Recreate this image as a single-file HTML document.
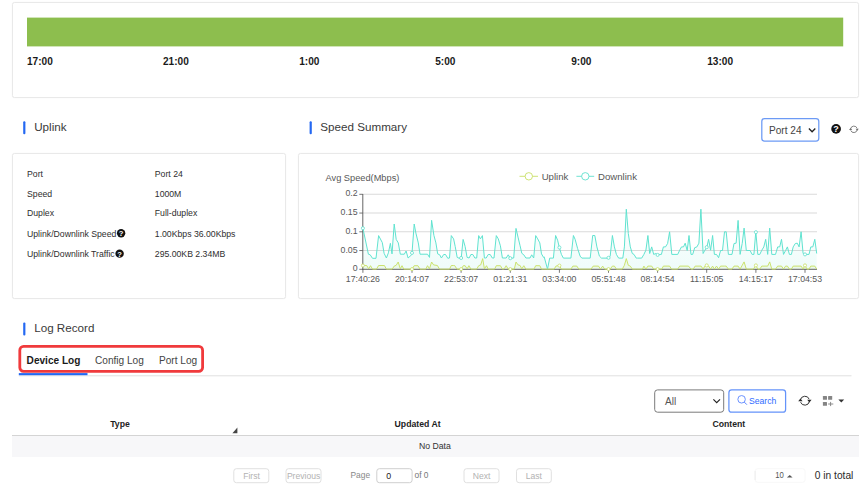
<!DOCTYPE html>
<html><head><meta charset="utf-8"><title>Port</title>
<style>
*{box-sizing:border-box;margin:0;padding:0}
html,body{width:863px;height:502px;background:#fff;overflow:hidden}
body{position:relative;font-family:"Liberation Sans",sans-serif;color:#333;font-size:8.7px}
.abs{position:absolute;white-space:nowrap}
.card{position:absolute;border:1px solid #e9e9e9;border-radius:2.5px;background:#fff;box-shadow:0 0 1.5px rgba(0,0,0,0.05)}
.tl{position:absolute;font-weight:bold;font-size:10.1px;color:#1a1a1a;top:56.3px;line-height:12px}
.bar{position:absolute;width:2px;background:#2468f2;border-radius:1px}
.h{position:absolute;font-size:11.65px;color:#3a3a3a;line-height:14px;white-space:nowrap}
.k{position:absolute;left:27px;font-size:8.7px;color:#2e2e2e;line-height:10px;white-space:nowrap}
.v{position:absolute;left:154.8px;font-size:8.7px;color:#2e2e2e;line-height:10px;white-space:nowrap}
.q{display:inline-block;width:8.4px;height:8.4px;border-radius:50%;background:#111;color:#fff;font-size:7px;font-weight:bold;line-height:8.6px;text-align:center;vertical-align:0.2px;margin-left:0.3px}
.ax{font-family:"Liberation Sans",sans-serif;font-size:8.75px;fill:#585858}
.lg{font-family:"Liberation Sans",sans-serif;font-size:9.6px;fill:#585858}
.tab{position:absolute;top:354.5px;font-size:10.1px;line-height:12px;color:#444;white-space:nowrap}
.btn{position:absolute;top:468.2px;height:15px;border:1px solid #e2e2e2;border-radius:2.5px;color:#b4b4b4;font-size:8.6px;line-height:13.4px;text-align:center;background:#fff}
.th{position:absolute;top:419px;font-weight:bold;font-size:8.7px;line-height:10px;color:#222;white-space:nowrap}
</style></head><body>

<div class="card" style="left:11.7px;top:1.8px;width:847.2px;height:95.8px"></div>
<svg class="abs" style="left:0;top:10px" width="863" height="40" viewBox="0 10 863 40"><rect x="27" y="17.6" width="816.2" height="28.8" fill="#8dbe4e"/></svg>
<div class="tl" style="left:27px">17:00</div>
<div class="tl" style="left:163px">21:00</div>
<div class="tl" style="left:299.2px">1:00</div>
<div class="tl" style="left:435.2px">5:00</div>
<div class="tl" style="left:571.2px">9:00</div>
<div class="tl" style="left:707.2px">13:00</div>


<div class="h" style="left:34.2px;top:120.3px">Uplink</div>

<div class="h" style="left:320.3px;top:120.3px">Speed Summary</div>

<svg class="abs" style="left:758px;top:115px" width="66" height="30" viewBox="758 115 66 30"><rect x="761.8" y="118.65" width="57" height="22.4" rx="2.8" fill="#fff" stroke="#6c9af5" stroke-width="1.25"/><path d="M808.9 128.5 L812.1 131.8 L815.3 128.5" fill="none" stroke="#222" stroke-width="1.3"/></svg>
<div class="abs" style="left:769px;top:124.6px;font-size:10.1px;line-height:12px;color:#444">Port 24</div>
<svg class="abs" style="left:828px;top:121px" width="16" height="16" viewBox="828 121 16 16"><circle cx="836.1" cy="128.9" r="4.85" fill="#111"/><text x="836.1" y="132.2" font-family="Liberation Sans, sans-serif" font-size="9" font-weight="bold" fill="#fff" text-anchor="middle">?</text></svg>
<svg class="abs" style="left:846px;top:122px" width="16" height="16" viewBox="846 122 16 16"><g fill="none" stroke="#6e6e6e" stroke-width="0.85"><path d="M850.6 128.8 A3.4 3.4 0 0 1 857.1 128.3"/><path d="M857.2 129.9 A3.4 3.4 0 0 1 850.7 130.4"/></g><path d="M855.6 128.7 L858.8 128.7 L857.2 130.7 Z M849 129.9 L852.2 129.9 L850.6 127.9 Z" fill="#6e6e6e"/></svg>

<div class="card" style="left:11.7px;top:153px;width:274.6px;height:145.5px"></div>
<div class="card" style="left:298px;top:153px;width:560.9px;height:145.5px"></div>

<svg class="abs" style="left:0;top:160px" width="290" height="110" viewBox="0 160 290 110" font-family="Liberation Sans, sans-serif" font-size="8.7" fill="#2e2e2e">
<text x="27" y="177">Port</text><text x="154.8" y="177">Port 24</text>
<text x="27" y="196.9">Speed</text><text x="154.8" y="196.9">1000M</text>
<text x="27" y="216.4">Duplex</text><text x="154.8" y="216.4">Full-duplex</text>
<text x="27" y="236.7">Uplink/Downlink Speed</text><text x="154.8" y="236.7">1.00Kbps 36.00Kbps</text>
<text x="27" y="257.3">Uplink/Downlink Traffic</text><text x="154.8" y="257.3">295.00KB 2.34MB</text>
<circle cx="121.1" cy="233.2" r="4.2" fill="#111"/><text x="121.1" y="236.1" font-size="7.6" font-weight="bold" fill="#fff" text-anchor="middle">?</text>
<circle cx="119.6" cy="253.6" r="4.2" fill="#111"/><text x="119.6" y="256.5" font-size="7.6" font-weight="bold" fill="#fff" text-anchor="middle">?</text>
</svg>

<svg class="abs" style="left:0;top:0" width="863" height="502" viewBox="0 0 863 502">
<text x="325.5" y="180.8" class="lg" style="font-size:9.25px">Avg Speed(Mbps)</text>
<line x1="519.5" y1="176.3" x2="538" y2="176.3" stroke="#c8e066" stroke-width="0.9"/>
<circle cx="528.8" cy="176.3" r="3.7" fill="#fff" stroke="#c8e066" stroke-width="0.9"/>
<text x="541.7" y="179.6" class="lg">Uplink</text>
<line x1="576.4" y1="176.3" x2="594.2" y2="176.3" stroke="#5fe0cd" stroke-width="0.9"/>
<circle cx="585.3" cy="176.3" r="3.7" fill="#fff" stroke="#5fe0cd" stroke-width="0.9"/>
<text x="598" y="179.6" class="lg">Downlink</text>
<line x1="362.8" y1="194.3" x2="817" y2="194.3" stroke="#dadada" stroke-width="1.1"/><line x1="362.8" y1="213.05" x2="817" y2="213.05" stroke="#dadada" stroke-width="1.1"/><line x1="362.8" y1="231.8" x2="817" y2="231.8" stroke="#dadada" stroke-width="1.1"/><line x1="362.8" y1="250.55" x2="817" y2="250.55" stroke="#dadada" stroke-width="1.1"/>
<defs><linearGradient id="gd" gradientUnits="userSpaceOnUse" x1="0" y1="205" x2="0" y2="269"><stop offset="0" stop-color="#5fe0cd" stop-opacity="0"/><stop offset="1" stop-color="#5fe0cd" stop-opacity="0.10"/></linearGradient><linearGradient id="gu" gradientUnits="userSpaceOnUse" x1="0" y1="250" x2="0" y2="269"><stop offset="0" stop-color="#c8e066" stop-opacity="0"/><stop offset="1" stop-color="#c8e066" stop-opacity="0.12"/></linearGradient></defs><polygon points="362.9,269.3 362.9,228.2 368.4,254.2 370.2,254.8 372.5,258.3 376.0,258.3 378.6,235.6 382.3,242.6 384.1,253.3 386.4,258.0 388.4,252.8 390.4,243.3 392.0,253.9 394.2,224.0 396.2,239.4 398.3,242.9 400.3,254.2 404.3,254.2 406.1,251.0 408.1,258.0 411.9,254.5 414.2,224.0 415.9,233.1 418.3,242.9 420.0,254.2 427.5,254.2 429.5,257.4 431.6,220.3 433.9,235.4 435.9,242.9 437.7,253.9 439.7,254.8 441.4,258.0 443.7,254.5 445.5,254.5 447.8,258.3 449.5,258.0 451.3,235.6 453.6,238.9 455.2,246.4 457.2,257.4 459.3,258.3 461.2,258.0 463.1,239.4 465.1,246.4 467.1,257.4 469.1,258.0 470.9,254.5 472.8,254.5 474.9,258.0 476.7,258.0 478.7,235.6 480.4,238.9 482.4,235.6 484.4,258.0 486.2,258.0 488.2,254.5 490.2,254.5 492.3,258.0 494.0,258.0 496.3,235.6 498.3,238.9 500.4,245.8 502.4,258.0 506.2,258.0 508.2,254.8 510.3,258.3 513.7,258.0 516.0,228.4 518.0,237.1 520.1,245.8 521.8,253.3 523.8,254.8 525.9,258.0 530.0,258.0 531.7,254.8 533.7,258.0 535.7,235.6 537.7,238.9 539.8,242.9 541.5,253.9 543.6,257.4 544.2,256.9 547.5,269.1 549.7,258.1 553.4,258.1 555.6,235.5 557.6,240.2 559.2,246.9 561.4,254.4 563.4,258.1 570.9,258.1 573.4,235.5 575.1,239.3 577.6,248.5 580.1,256.1 581.8,258.1 590.2,258.1 592.7,235.5 594.8,235.5 596.9,246.9 599.4,256.1 601.5,258.1 608.2,258.1 610.2,256.1 612.4,235.5 614.4,246.9 616.4,254.4 618.6,258.1 622.8,258.1 624.4,246.9 626.3,209.2 628.3,233.5 630.3,246.9 632.3,253.5 634.0,254.4 636.2,258.1 637.5,258.1 641.7,258.1 643.9,254.4 645.9,250.2 647.9,235.5 649.7,253.5 651.7,246.9 653.7,254.4 655.9,253.5 657.6,254.9 659.8,254.4 661.4,254.4 663.4,246.9 665.5,246.9 667.6,243.5 669.6,231.8 671.8,254.4 677.7,254.4 679.7,250.2 681.5,246.9 683.5,246.9 685.2,243.2 687.2,250.5 689.0,235.5 691.0,254.4 692.7,254.4 694.7,247.7 696.9,246.9 698.9,243.2 700.9,209.2 703.1,253.5 704.9,250.2 706.9,246.9 708.6,239.3 710.6,250.2 712.6,235.5 714.4,254.4 716.5,254.4 718.6,257.7 720.6,250.5 722.5,250.5 724.5,231.8 726.2,231.8 728.4,254.4 732.0,254.4 734.0,243.5 736.1,243.2 738.1,220.4 740.1,254.4 742.2,243.5 744.1,228.1 746.3,250.5 750.1,250.5 752.1,254.4 753.9,254.4 755.8,231.5 757.8,254.4 759.8,254.4 761.8,250.2 763.8,246.9 765.7,239.3 767.7,254.4 769.7,228.1 771.8,254.4 775.5,254.4 777.7,246.9 779.7,246.9 781.5,239.3 783.5,254.4 785.6,250.5 787.4,246.9 789.4,254.4 791.4,254.4 793.2,246.9 795.3,243.5 797.3,243.2 799.1,246.9 801.1,231.8 803.1,253.5 804.9,254.4 809.0,254.4 810.8,246.9 812.8,246.9 814.8,239.3 816.7,253.5 816.7,269.3" fill="url(#gd)"/>
<polygon points="362.9,269.3 362.9,265.5 366.7,265.5 368.7,268.8 370.5,265.7 372.5,269.1 376.5,269.1 378.6,265.5 384.4,265.5 386.4,269.1 392.2,269.1 394.2,266.1 396.2,265.3 398.2,262.0 400.3,268.8 402.0,265.7 403.8,269.1 410.1,269.1 412.1,269.1 414.2,265.7 417.9,265.7 420.0,269.1 425.8,269.1 427.5,265.7 429.5,268.8 431.6,262.0 433.6,264.9 437.4,265.5 439.5,269.1 449.5,269.1 451.3,265.5 453.6,265.5 454.6,265.5 457.0,269.1 461.2,269.1 463.3,265.7 465.1,265.7 467.1,268.8 468.9,265.7 470.9,269.1 476.7,269.1 478.7,265.7 480.7,264.9 482.7,258.6 484.4,268.8 486.5,265.7 488.2,269.1 494.6,269.1 496.3,265.7 500.4,265.7 502.4,269.1 504.2,268.8 506.2,265.7 508.2,269.1 510.3,269.1 514.3,269.1 516.0,262.0 518.0,264.9 520.1,265.5 521.8,268.8 523.8,265.7 525.9,269.1 534.0,269.1 535.7,265.7 539.8,265.7 541.5,269.1 543.9,269.1 544.2,269.1 554.2,269.1 555.9,266.1 559.2,265.3 561.4,269.1 570.9,269.1 572.9,266.1 576.8,266.1 578.8,269.1 591.0,269.1 593.2,266.1 598.5,266.1 600.5,269.1 602.7,266.1 604.7,269.1 608.2,269.1 610.2,269.1 612.4,266.1 614.4,266.1 616.4,269.1 622.3,269.1 624.4,265.3 626.3,258.6 628.3,265.3 630.3,266.1 632.3,269.1 636.2,269.1 642.5,269.1 643.9,266.1 645.9,269.1 647.9,266.1 651.7,266.1 653.7,269.1 657.6,269.1 661.8,269.1 663.4,266.1 669.6,266.1 671.5,269.1 677.7,269.1 679.7,266.1 688.5,266.1 691.0,269.1 693.2,269.1 695.2,266.1 701.1,266.1 703.1,269.1 704.9,266.1 706.9,265.3 708.6,266.1 710.6,269.1 712.6,266.1 714.4,269.1 716.5,266.1 718.6,269.1 720.6,266.1 724.5,266.1 726.2,266.1 728.4,269.1 732.0,269.1 734.0,266.1 738.1,266.1 740.1,269.1 742.2,265.3 744.1,261.9 746.3,269.1 753.4,269.1 755.8,265.3 757.8,269.1 759.8,269.1 761.8,266.1 767.7,266.1 769.7,261.9 771.8,269.1 775.5,269.1 777.7,266.1 781.5,266.1 783.5,269.1 785.6,266.1 787.4,266.1 789.4,269.1 791.4,269.1 793.2,266.1 801.1,266.1 803.1,269.1 804.9,265.3 807.0,269.1 809.0,269.1 810.8,266.1 814.8,266.1 816.7,269.1 816.7,269.3" fill="url(#gu)"/>
<line x1="362.8" y1="194" x2="362.8" y2="269.7" stroke="#555" stroke-width="0.9"/>
<line x1="362.4" y1="269.3" x2="817" y2="269.3" stroke="#555" stroke-width="0.9"/>
<line x1="362.9" y1="269.3" x2="362.9" y2="272.8" stroke="#555" stroke-width="0.8"/><line x1="412.0" y1="269.3" x2="412.0" y2="272.8" stroke="#555" stroke-width="0.8"/><line x1="461.1" y1="269.3" x2="461.1" y2="272.8" stroke="#555" stroke-width="0.8"/><line x1="510.3" y1="269.3" x2="510.3" y2="272.8" stroke="#555" stroke-width="0.8"/><line x1="559.4" y1="269.3" x2="559.4" y2="272.8" stroke="#555" stroke-width="0.8"/><line x1="608.5" y1="269.3" x2="608.5" y2="272.8" stroke="#555" stroke-width="0.8"/><line x1="657.6" y1="269.3" x2="657.6" y2="272.8" stroke="#555" stroke-width="0.8"/><line x1="706.7" y1="269.3" x2="706.7" y2="272.8" stroke="#555" stroke-width="0.8"/><line x1="755.9" y1="269.3" x2="755.9" y2="272.8" stroke="#555" stroke-width="0.8"/><line x1="805.0" y1="269.3" x2="805.0" y2="272.8" stroke="#555" stroke-width="0.8"/><text x="357.6" y="196.3" text-anchor="end" class="ax">0.2</text><line x1="359.3" y1="194.3" x2="362.8" y2="194.3" stroke="#555" stroke-width="0.8"/><text x="357.6" y="215.1" text-anchor="end" class="ax">0.15</text><line x1="359.3" y1="213.05" x2="362.8" y2="213.05" stroke="#555" stroke-width="0.8"/><text x="357.6" y="233.8" text-anchor="end" class="ax">0.1</text><line x1="359.3" y1="231.8" x2="362.8" y2="231.8" stroke="#555" stroke-width="0.8"/><text x="357.6" y="252.6" text-anchor="end" class="ax">0.05</text><line x1="359.3" y1="250.55" x2="362.8" y2="250.55" stroke="#555" stroke-width="0.8"/><text x="357.6" y="271.3" text-anchor="end" class="ax">0</text><line x1="359.3" y1="269.3" x2="362.8" y2="269.3" stroke="#555" stroke-width="0.8"/><text x="362.9" y="281.7" text-anchor="middle" class="ax">17:40:26</text><text x="412.0" y="281.7" text-anchor="middle" class="ax">20:14:07</text><text x="461.1" y="281.7" text-anchor="middle" class="ax">22:53:07</text><text x="510.3" y="281.7" text-anchor="middle" class="ax">01:21:31</text><text x="559.4" y="281.7" text-anchor="middle" class="ax">03:34:00</text><text x="608.5" y="281.7" text-anchor="middle" class="ax">05:51:48</text><text x="657.6" y="281.7" text-anchor="middle" class="ax">08:14:54</text><text x="706.7" y="281.7" text-anchor="middle" class="ax">11:15:05</text><text x="755.9" y="281.7" text-anchor="middle" class="ax">14:15:17</text><text x="805.0" y="281.7" text-anchor="middle" class="ax">17:04:53</text>
<polyline points="362.9,228.2 368.4,254.2 370.2,254.8 372.5,258.3 376.0,258.3 378.6,235.6 382.3,242.6 384.1,253.3 386.4,258.0 388.4,252.8 390.4,243.3 392.0,253.9 394.2,224.0 396.2,239.4 398.3,242.9 400.3,254.2 404.3,254.2 406.1,251.0 408.1,258.0 411.9,254.5 414.2,224.0 415.9,233.1 418.3,242.9 420.0,254.2 427.5,254.2 429.5,257.4 431.6,220.3 433.9,235.4 435.9,242.9 437.7,253.9 439.7,254.8 441.4,258.0 443.7,254.5 445.5,254.5 447.8,258.3 449.5,258.0 451.3,235.6 453.6,238.9 455.2,246.4 457.2,257.4 459.3,258.3 461.2,258.0 463.1,239.4 465.1,246.4 467.1,257.4 469.1,258.0 470.9,254.5 472.8,254.5 474.9,258.0 476.7,258.0 478.7,235.6 480.4,238.9 482.4,235.6 484.4,258.0 486.2,258.0 488.2,254.5 490.2,254.5 492.3,258.0 494.0,258.0 496.3,235.6 498.3,238.9 500.4,245.8 502.4,258.0 506.2,258.0 508.2,254.8 510.3,258.3 513.7,258.0 516.0,228.4 518.0,237.1 520.1,245.8 521.8,253.3 523.8,254.8 525.9,258.0 530.0,258.0 531.7,254.8 533.7,258.0 535.7,235.6 537.7,238.9 539.8,242.9 541.5,253.9 543.6,257.4 544.2,256.9 547.5,269.1 549.7,258.1 553.4,258.1 555.6,235.5 557.6,240.2 559.2,246.9 561.4,254.4 563.4,258.1 570.9,258.1 573.4,235.5 575.1,239.3 577.6,248.5 580.1,256.1 581.8,258.1 590.2,258.1 592.7,235.5 594.8,235.5 596.9,246.9 599.4,256.1 601.5,258.1 608.2,258.1 610.2,256.1 612.4,235.5 614.4,246.9 616.4,254.4 618.6,258.1 622.8,258.1 624.4,246.9 626.3,209.2 628.3,233.5 630.3,246.9 632.3,253.5 634.0,254.4 636.2,258.1 637.5,258.1 641.7,258.1 643.9,254.4 645.9,250.2 647.9,235.5 649.7,253.5 651.7,246.9 653.7,254.4 655.9,253.5 657.6,254.9 659.8,254.4 661.4,254.4 663.4,246.9 665.5,246.9 667.6,243.5 669.6,231.8 671.8,254.4 677.7,254.4 679.7,250.2 681.5,246.9 683.5,246.9 685.2,243.2 687.2,250.5 689.0,235.5 691.0,254.4 692.7,254.4 694.7,247.7 696.9,246.9 698.9,243.2 700.9,209.2 703.1,253.5 704.9,250.2 706.9,246.9 708.6,239.3 710.6,250.2 712.6,235.5 714.4,254.4 716.5,254.4 718.6,257.7 720.6,250.5 722.5,250.5 724.5,231.8 726.2,231.8 728.4,254.4 732.0,254.4 734.0,243.5 736.1,243.2 738.1,220.4 740.1,254.4 742.2,243.5 744.1,228.1 746.3,250.5 750.1,250.5 752.1,254.4 753.9,254.4 755.8,231.5 757.8,254.4 759.8,254.4 761.8,250.2 763.8,246.9 765.7,239.3 767.7,254.4 769.7,228.1 771.8,254.4 775.5,254.4 777.7,246.9 779.7,246.9 781.5,239.3 783.5,254.4 785.6,250.5 787.4,246.9 789.4,254.4 791.4,254.4 793.2,246.9 795.3,243.5 797.3,243.2 799.1,246.9 801.1,231.8 803.1,253.5 804.9,254.4 809.0,254.4 810.8,246.9 812.8,246.9 814.8,239.3 816.7,253.5" fill="none" stroke="#60e3d0" stroke-width="1" stroke-linejoin="round"/>
<polyline points="362.9,265.5 366.7,265.5 368.7,268.8 370.5,265.7 372.5,269.1 376.5,269.1 378.6,265.5 384.4,265.5 386.4,269.1 392.2,269.1 394.2,266.1 396.2,265.3 398.2,262.0 400.3,268.8 402.0,265.7 403.8,269.1 410.1,269.1 412.1,269.1 414.2,265.7 417.9,265.7 420.0,269.1 425.8,269.1 427.5,265.7 429.5,268.8 431.6,262.0 433.6,264.9 437.4,265.5 439.5,269.1 449.5,269.1 451.3,265.5 453.6,265.5 454.6,265.5 457.0,269.1 461.2,269.1 463.3,265.7 465.1,265.7 467.1,268.8 468.9,265.7 470.9,269.1 476.7,269.1 478.7,265.7 480.7,264.9 482.7,258.6 484.4,268.8 486.5,265.7 488.2,269.1 494.6,269.1 496.3,265.7 500.4,265.7 502.4,269.1 504.2,268.8 506.2,265.7 508.2,269.1 510.3,269.1 514.3,269.1 516.0,262.0 518.0,264.9 520.1,265.5 521.8,268.8 523.8,265.7 525.9,269.1 534.0,269.1 535.7,265.7 539.8,265.7 541.5,269.1 543.9,269.1 544.2,269.1 554.2,269.1 555.9,266.1 559.2,265.3 561.4,269.1 570.9,269.1 572.9,266.1 576.8,266.1 578.8,269.1 591.0,269.1 593.2,266.1 598.5,266.1 600.5,269.1 602.7,266.1 604.7,269.1 608.2,269.1 610.2,269.1 612.4,266.1 614.4,266.1 616.4,269.1 622.3,269.1 624.4,265.3 626.3,258.6 628.3,265.3 630.3,266.1 632.3,269.1 636.2,269.1 642.5,269.1 643.9,266.1 645.9,269.1 647.9,266.1 651.7,266.1 653.7,269.1 657.6,269.1 661.8,269.1 663.4,266.1 669.6,266.1 671.5,269.1 677.7,269.1 679.7,266.1 688.5,266.1 691.0,269.1 693.2,269.1 695.2,266.1 701.1,266.1 703.1,269.1 704.9,266.1 706.9,265.3 708.6,266.1 710.6,269.1 712.6,266.1 714.4,269.1 716.5,266.1 718.6,269.1 720.6,266.1 724.5,266.1 726.2,266.1 728.4,269.1 732.0,269.1 734.0,266.1 738.1,266.1 740.1,269.1 742.2,265.3 744.1,261.9 746.3,269.1 753.4,269.1 755.8,265.3 757.8,269.1 759.8,269.1 761.8,266.1 767.7,266.1 769.7,261.9 771.8,269.1 775.5,269.1 777.7,266.1 781.5,266.1 783.5,269.1 785.6,266.1 787.4,266.1 789.4,269.1 791.4,269.1 793.2,266.1 801.1,266.1 803.1,269.1 804.9,265.3 807.0,269.1 809.0,269.1 810.8,266.1 814.8,266.1 816.7,269.1" fill="none" stroke="#c8e066" stroke-width="0.95" stroke-linejoin="round"/>
<circle cx="362.9" cy="228.2" r="1.55" fill="#fff" stroke="#5fe0cd" stroke-width="0.8"/><circle cx="412.0" cy="252.9" r="1.55" fill="#fff" stroke="#5fe0cd" stroke-width="0.8"/><circle cx="461.1" cy="258.0" r="1.55" fill="#fff" stroke="#5fe0cd" stroke-width="0.8"/><circle cx="510.3" cy="258.2" r="1.55" fill="#fff" stroke="#5fe0cd" stroke-width="0.8"/><circle cx="559.4" cy="247.5" r="1.55" fill="#fff" stroke="#5fe0cd" stroke-width="0.8"/><circle cx="608.5" cy="257.8" r="1.55" fill="#fff" stroke="#5fe0cd" stroke-width="0.8"/><circle cx="657.6" cy="254.9" r="1.55" fill="#fff" stroke="#5fe0cd" stroke-width="0.8"/><circle cx="706.7" cy="247.2" r="1.55" fill="#fff" stroke="#5fe0cd" stroke-width="0.8"/><circle cx="755.9" cy="232.2" r="1.55" fill="#fff" stroke="#5fe0cd" stroke-width="0.8"/><circle cx="805.0" cy="254.4" r="1.55" fill="#fff" stroke="#5fe0cd" stroke-width="0.8"/><circle cx="362.9" cy="265.5" r="1.55" fill="#fff" stroke="#c8e066" stroke-width="0.8"/><circle cx="412.0" cy="269.1" r="1.55" fill="#fff" stroke="#c8e066" stroke-width="0.8"/><circle cx="461.1" cy="269.1" r="1.55" fill="#fff" stroke="#c8e066" stroke-width="0.8"/><circle cx="510.3" cy="269.1" r="1.55" fill="#fff" stroke="#c8e066" stroke-width="0.8"/><circle cx="559.4" cy="265.6" r="1.55" fill="#fff" stroke="#c8e066" stroke-width="0.8"/><circle cx="608.5" cy="269.1" r="1.55" fill="#fff" stroke="#c8e066" stroke-width="0.8"/><circle cx="657.6" cy="269.1" r="1.55" fill="#fff" stroke="#c8e066" stroke-width="0.8"/><circle cx="706.7" cy="265.4" r="1.55" fill="#fff" stroke="#c8e066" stroke-width="0.8"/><circle cx="755.9" cy="265.4" r="1.55" fill="#fff" stroke="#c8e066" stroke-width="0.8"/><circle cx="805.0" cy="265.4" r="1.55" fill="#fff" stroke="#c8e066" stroke-width="0.8"/>
</svg>

<svg class="abs" style="left:0;top:0" width="863" height="502" viewBox="0 0 863 502"><g fill="#2468f2"><rect x="23.2" y="121.2" width="2.2" height="13" rx="1"/><rect x="309.6" y="121.2" width="2.2" height="13" rx="1"/><rect x="23.2" y="322.5" width="2.2" height="13" rx="1"/></g></svg>
<div class="h" style="left:34.2px;top:321.1px">Log Record</div>

<svg class="abs" style="left:0;top:340px" width="863" height="40" viewBox="0 340 863 40">
<rect x="18.8" y="375" width="832.7" height="1.4" fill="#e9e9e9"/>
<rect x="18.8" y="373.1" width="68.7" height="2.1" fill="#2468f2"/>
<rect x="19.8" y="346.4" width="182.8" height="25" rx="3.8" fill="none" stroke="#f03a3c" stroke-width="2.8"/>
</svg>
<div class="tab" style="left:26.6px;font-weight:bold;color:#1a1a1a">Device Log</div>
<div class="tab" style="left:95px">Config Log</div>
<div class="tab" style="left:159px">Port Log</div>

<svg class="abs" style="left:650px;top:385px" width="140" height="32" viewBox="650 385 140 32">
<rect x="654.7" y="389.9" width="69" height="22.3" rx="2.8" fill="#fff" stroke="#7a7a7a" stroke-width="1"/>
<rect x="728.9" y="389.9" width="56.7" height="22.3" rx="2.8" fill="#fff" stroke="#6493fa" stroke-width="1.25"/>
<path d="M713.4 399.3 L716.7 402.6 L720 399.3" fill="none" stroke="#222" stroke-width="1.15"/>
</svg>
<div class="abs" style="left:665px;top:396px;font-size:10.1px;line-height:12px;color:#555">All</div>
<svg class="abs" style="left:735px;top:392px" width="14" height="15" viewBox="735 392 14 15"><circle cx="741.6" cy="399.3" r="3.75" fill="none" stroke="#5a86ff" stroke-width="0.9"/><path d="M744.3 402.1 L746.9 404.7" stroke="#5a86ff" stroke-width="1"/></svg>
<div class="abs" style="left:749px;top:396px;font-size:8.65px;line-height:10px;color:#2f6bff">Search</div>

<svg class="abs" style="left:794px;top:390px" width="44" height="22" viewBox="794 390 44 22">
<g fill="none" stroke="#2a2a2a" stroke-width="0.95"><path d="M800.4 399.9 A4.6 4.6 0 0 1 809.2 399.2"/><path d="M809.4 401.5 A4.6 4.6 0 0 1 800.6 402.2"/></g>
<path d="M807.2 399.8 L811.6 399.8 L809.4 402.5 Z M798.2 401.3 L802.6 401.3 L800.4 398.6 Z" fill="#2a2a2a"/>
<g fill="#858585"><rect x="822.9" y="396.1" width="4.1" height="3.7" rx="0.5"/><rect x="828.1" y="396.1" width="4.1" height="3.7" rx="0.5"/><rect x="822.9" y="402" width="4.1" height="3.7" rx="0.5"/></g>
<path d="M830.6 401.9 V406.1 M828.1 404 H833.3" stroke="#808080" stroke-width="0.9" fill="none"/>
</svg>
<svg class="abs" style="left:836px;top:396px" width="10" height="10" viewBox="836 396 10 10"><path d="M838.4 399.4 L844.2 399.4 L841.3 402.6 Z" fill="#333"/></svg>

<div class="th" style="left:110.2px">Type</div>
<div class="th" style="left:394.6px">Updated At</div>
<div class="th" style="left:712.4px">Content</div>
<svg class="abs" style="left:231.6px;top:426.6px" width="6" height="7" viewBox="0 0 6 7"><path d="M5.4 0.4 L5.4 6.2 L0.4 6.2 Z" fill="#444"/></svg>
<div class="abs" style="left:11.8px;top:434.9px;width:846.9px;height:1px;background:#d4d4d4"></div>
<div class="abs" style="left:11.8px;top:435.9px;width:846.9px;height:21px;background:#f7f7f9"></div>
<div class="abs" style="left:419px;top:440.8px;font-size:8.7px;line-height:10px;color:#333">No Data</div>

<svg class="abs" style="left:0;top:460px" width="863" height="42" viewBox="0 460 863 42" font-family="Liberation Sans, sans-serif">
<g fill="#fff" stroke="#e0e0e0" stroke-width="1">
<rect x="233.8" y="468.7" width="35" height="14" rx="2.6"/>
<rect x="286" y="468.7" width="35" height="14" rx="2.6"/>
<rect x="464" y="468.7" width="35" height="14" rx="2.6"/>
<rect x="516.5" y="468.7" width="34.8" height="14" rx="2.6"/>
</g>
<rect x="376.8" y="468.7" width="35.3" height="14" rx="2.6" fill="#fff" stroke="#cfcfcf" stroke-width="1"/>
<rect x="755.1" y="468.7" width="50" height="13.6" rx="2.6" fill="#fff" stroke="#f8f8f8" stroke-width="1"/><path d="M755.1 471 V480" stroke="#ededed" stroke-width="1"/>
<g font-size="8.6" fill="#b2b2b2" text-anchor="middle">
<text x="251.5" y="478.9">First</text>
<text x="303.6" y="478.9">Previous</text>
<text x="481.6" y="478.9">Next</text>
<text x="533.9" y="478.9">Last</text>
</g>
<text x="350.5" y="478.4" font-size="8.4" fill="#888">Page</text>
<text x="414.5" y="478.4" font-size="8.4" fill="#777">of 0</text>
<text x="388.8" y="478.9" font-size="8.8" fill="#222" text-anchor="middle">0</text>
<text x="775.2" y="478.4" font-size="8.6" fill="#555" textLength="8.6" lengthAdjust="spacingAndGlyphs">10</text>
<path d="M786.9 477.6 L792.6 477.6 L789.75 475.1 Z" fill="#555"/>
<text x="814.8" y="479" font-size="10.2" fill="#2a2a2a">0 in total</text>
</svg>

</body></html>
